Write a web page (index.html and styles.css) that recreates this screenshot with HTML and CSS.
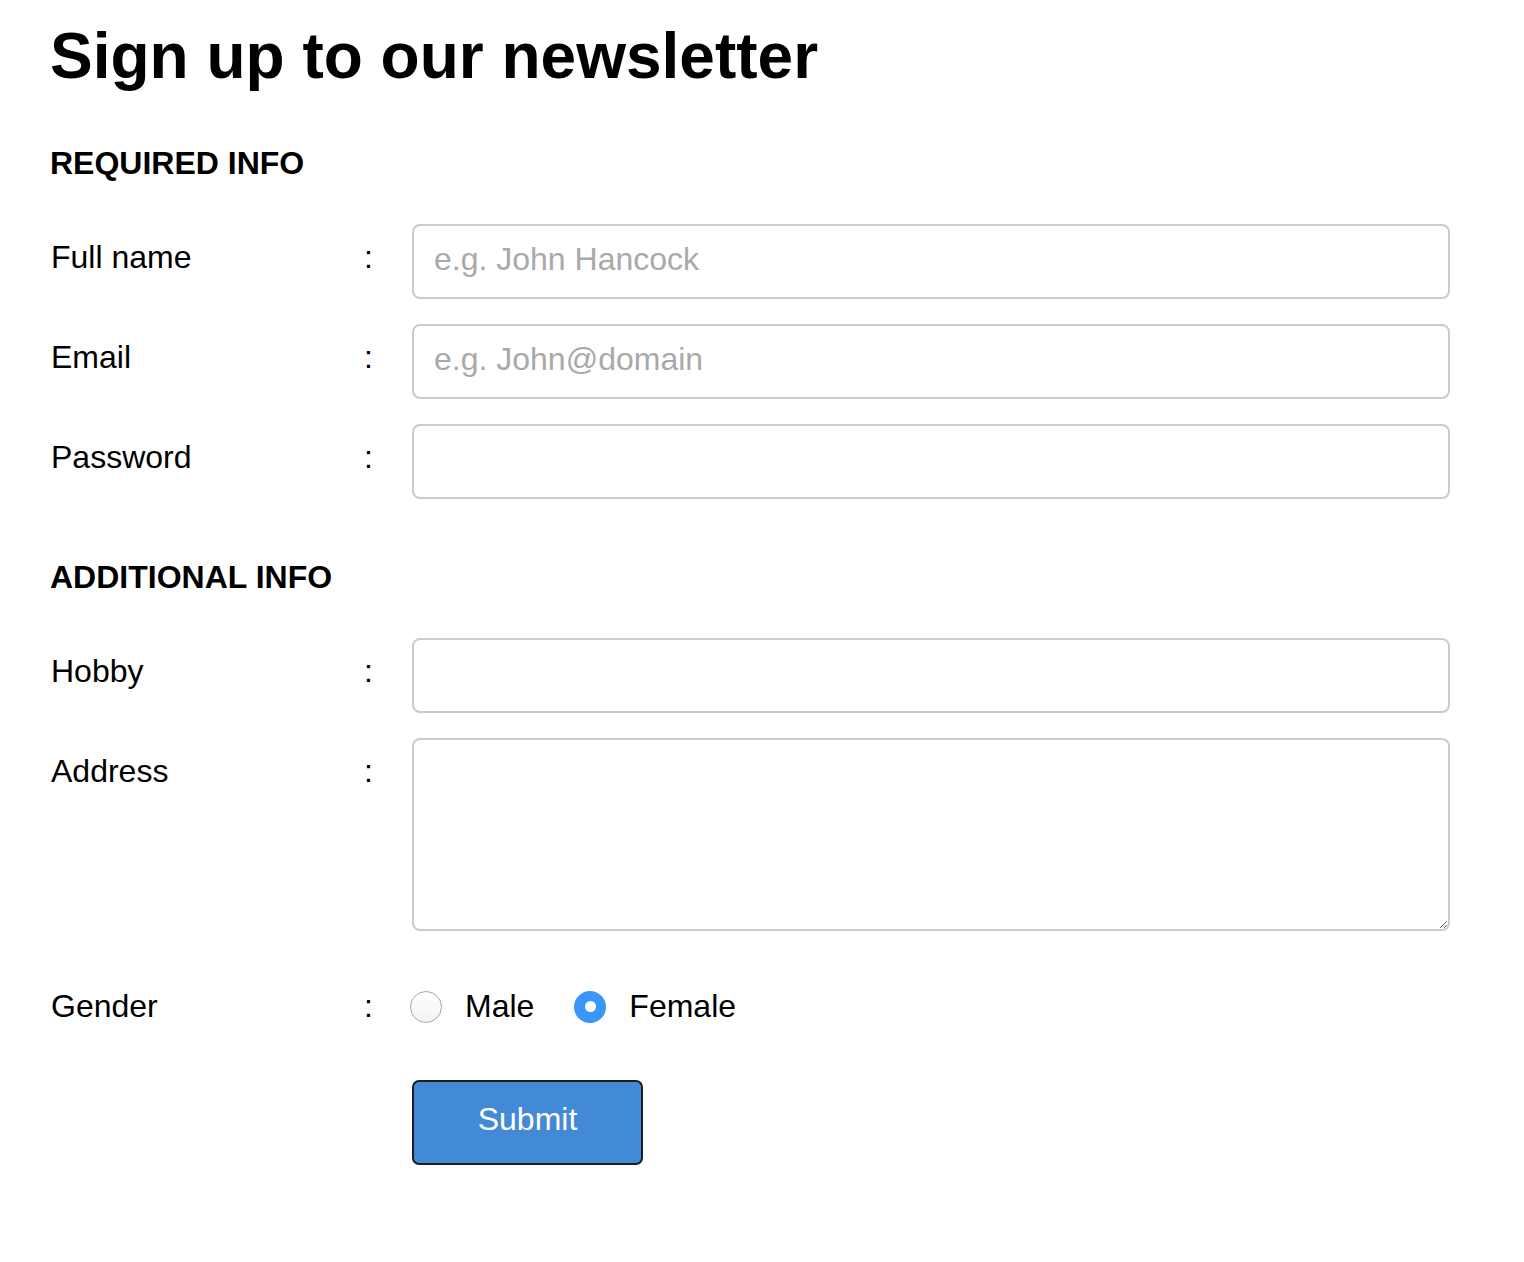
FILE: index.html
```html
<!DOCTYPE html>
<html lang="en">
<head>
<meta charset="utf-8">
<title>Sign up to our newsletter</title>
<link rel="stylesheet" href="styles.css">
</head>
<body>
<main class="page">
  <h1 class="title">Sign up to our newsletter</h1>
  <form class="form">
    <section class="group">
      <h3 class="group-title">REQUIRED INFO</h3>
      <div class="rows">
        <div class="row">
          <label class="label" for="fullname">Full name</label>
          <span class="colon">:</span>
          <input class="field" id="fullname" type="text" placeholder="e.g. John Hancock">
        </div>
        <div class="row">
          <label class="label" for="email">Email</label>
          <span class="colon">:</span>
          <input class="field" id="email" type="email" placeholder="e.g. John@domain">
        </div>
        <div class="row">
          <label class="label" for="password">Password</label>
          <span class="colon">:</span>
          <input class="field" id="password" type="password">
        </div>
      </div>
    </section>
    <section class="group group-additional">
      <h3 class="group-title">ADDITIONAL INFO</h3>
      <div class="rows">
        <div class="row">
          <label class="label" for="hobby">Hobby</label>
          <span class="colon">:</span>
          <input class="field" id="hobby" type="text">
        </div>
        <div class="row">
          <label class="label" for="address">Address</label>
          <span class="colon">:</span>
          <textarea class="field area" id="address"></textarea>
        </div>
      </div>
    </section>
    <div class="row row-gender">
      <span class="label label-inline">Gender</span>
      <span class="colon colon-inline">:</span>
      <div class="radios">
        <label class="radio-option"><input class="radio" type="radio" name="gender" value="male"><span>Male</span></label>
        <label class="radio-option"><input class="radio" type="radio" name="gender" value="female" checked><span>Female</span></label>
      </div>
    </div>
    <div class="row row-submit">
      <span class="label"></span>
      <span class="colon"></span>
      <button class="submit" type="submit">Submit</button>
    </div>
  </form>
</main>
</body>
</html>
```

FILE: styles.css
```css
html, body {
  margin: 0;
  padding: 0;
  background: #ffffff;
}

body {
  font-family: "Liberation Sans", Arial, Helvetica, sans-serif;
  color: #000000;
}

.page {
  padding: 19px 74px 80px 50px;
}

.title {
  margin: 0;
  font-size: 64px;
  line-height: 74px;
  font-weight: 700;
}

.form {
  display: flex;
  flex-direction: column;
}

.group-title {
  margin: 52px 0 42px 0;
  font-size: 32px;
  line-height: 37px;
  font-weight: 700;
}

.group-additional .group-title {
  margin-top: 60px;
}

.rows {
  display: flex;
  flex-direction: column;
  gap: 25px;
}

.row {
  display: flex;
  align-items: flex-start;
}

.label {
  width: 300px;
  flex: none;
  padding-top: 15px;
  font-size: 32px;
  line-height: 37px;
  padding-left: 1px;
  box-sizing: border-box;
}

.colon {
  width: 62px;
  flex: none;
  padding-top: 15px;
  padding-left: 14px;
  box-sizing: border-box;
  font-size: 32px;
  line-height: 37px;
}

.field {
  flex: 1;
  min-width: 0;
  height: 75px;
  box-sizing: border-box;
  margin: 0;
  padding: 0 20px 4px 20px;
  border: 2px solid #cbcbcb;
  border-radius: 8px;
  background: #ffffff;
  font-family: "Liberation Sans", Arial, Helvetica, sans-serif;
  font-size: 32px;
  color: #000000;
  outline: none;
}

.field::placeholder {
  color: #a9a9a9;
}

.area {
  height: 193px;
  padding: 14px 20px;
  resize: vertical;
}

.row-gender {
  margin-top: 57px;
  align-items: center;
}

.label-inline,
.colon-inline {
  padding-top: 0;
}

.radios {
  display: flex;
  align-items: center;
  gap: 40px;
  margin-left: -2px;
}

.radio-option {
  display: flex;
  align-items: center;
  gap: 23px;
  font-size: 32px;
  line-height: 37px;
}

.radio {
  appearance: none;
  -webkit-appearance: none;
  margin: 0;
  width: 32px;
  height: 32px;
  border-radius: 50%;
  border: 1.5px solid #a9a9a9;
  background: linear-gradient(#ffffff, #f3f3f3);
  box-sizing: border-box;
  display: grid;
  place-items: center;
}

.radio:checked {
  border: none;
  background: #3a97f9;
}

.radio:checked::after {
  content: "";
  width: 11px;
  height: 11px;
  border-radius: 50%;
  background: #ffffff;
}

.row-submit {
  margin-top: 55px;
}

.submit {
  width: 231px;
  height: 85px;
  box-sizing: border-box;
  border: 2px solid #1e1e1e;
  border-radius: 7px;
  background: #4289d6;
  color: #ffffff;
  font-family: "Liberation Sans", Arial, Helvetica, sans-serif;
  font-size: 32px;
  padding: 0 0 6px 0;
  cursor: pointer;
}
```
